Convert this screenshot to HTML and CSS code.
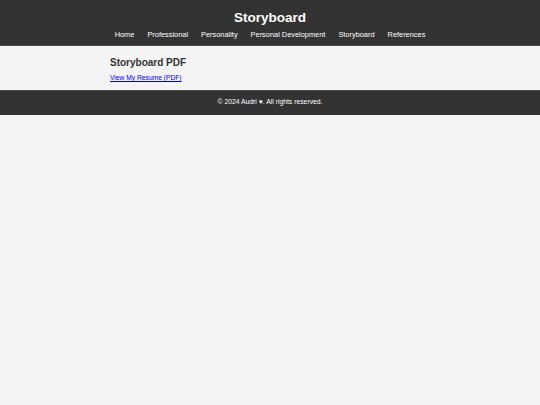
FILE: index.html
```html
<!DOCTYPE html>
<html lang="en">
<head>
<meta charset="utf-8">
<title>Storyboard</title>
<link rel="stylesheet" href="styles.css">
</head>
<body>
<header class="site-header">
  <h1 class="site-title">Storyboard</h1>
  <nav class="site-nav">
    <a href="#">Home</a>
    <a href="#">Professional</a>
    <a href="#">Personality</a>
    <a href="#">Personal Development</a>
    <a href="#">Storyboard</a>
    <a href="#">References</a>
  </nav>
</header>
<main class="content">
  <div class="container">
    <h2 class="section-title">Storyboard PDF</h2>
    <a class="pdf-link" href="#">View My Resume (PDF)</a>
  </div>
</main>
<footer class="site-footer">
  <p>© 2024 Audri ♥. All rights reserved.</p>
</footer>
</body>
</html>
```
FILE: styles.css
```css
html, body {
  margin: 0;
  padding: 0;
}
body {
  background: #f4f4f4;
  font-family: "Liberation Sans", Arial, sans-serif;
  color: #333;
}
.site-header {
  background: #333;
  color: #fff;
  padding: 9px 0 5px;
  text-align: center;
  border-bottom: 1px solid #4a4a4a;
}
.site-title {
  margin: 0;
  font-size: 13.5px;
  line-height: 18px;
  font-weight: bold;
}
.site-nav {
  margin-top: 3px;
  display: flex;
  justify-content: center;
  gap: 13px;
  font-size: 7.4px;
  line-height: 10px;
}
.site-nav a {
  color: #fff;
  text-decoration: none;
}
.content {
  padding: 10px 0 8px;
}
.container {
  max-width: 320px;
  margin: 0 auto;
  font-size: 6.7px;
  line-height: 9px;
}
.section-title {
  margin: 0;
  font-size: 10px;
  line-height: 14px;
  font-weight: bold;
  color: #333;
}
.pdf-link {
  display: block;
  width: max-content;
  margin-top: 3px;
  color: #0000ee;
}
.site-footer {
  background: #333;
  color: #fff;
  text-align: center;
  border-top: 1px solid #4a4a4a;
  padding: 6px 0 8px;
}
.site-footer p {
  margin: 0;
  font-size: 6.8px;
  line-height: 10px;
}
```
